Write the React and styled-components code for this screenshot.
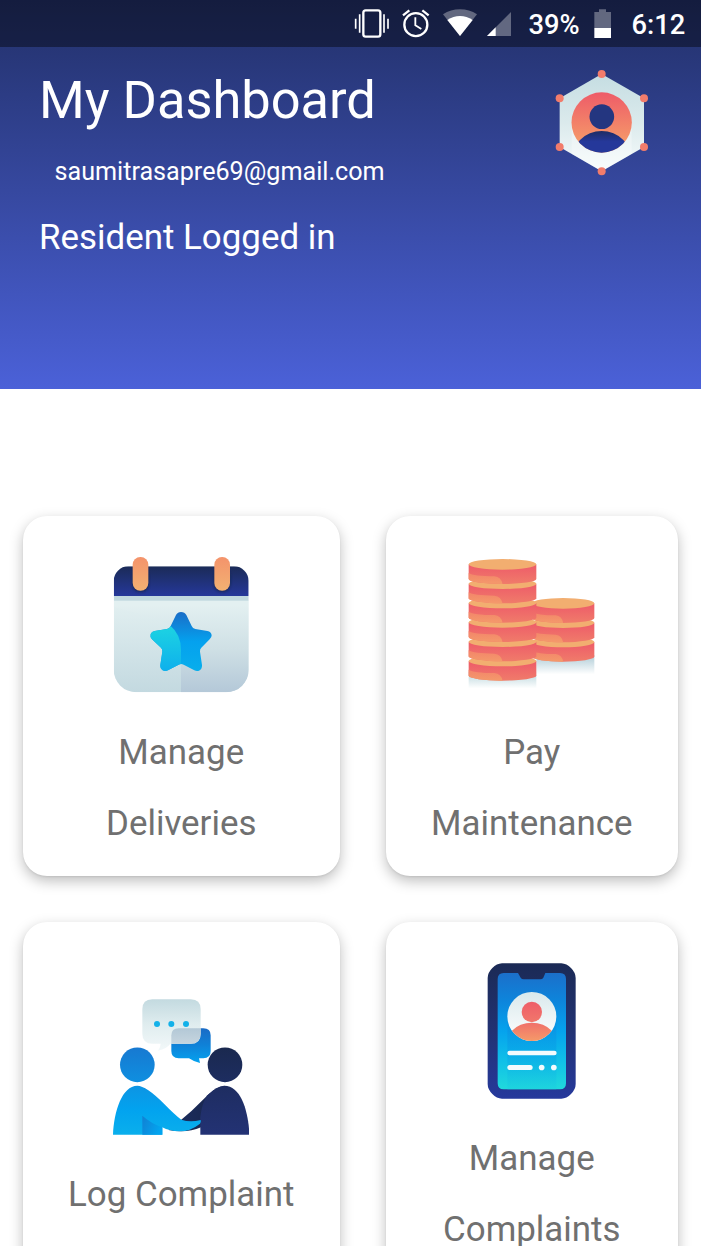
import React from "react";
import styled, { createGlobalStyle } from "styled-components";

const GlobalStyle = createGlobalStyle`
  * { box-sizing: border-box; }
  body { margin: 0; background: #fff; font-family: Roboto, "Liberation Sans", sans-serif; }
`;

const Screen = styled.div`
  width: 100%;
  height: 1246px;
  overflow: hidden;
  background: #fff;
`;

const Header = styled.header`
  height: 389px;
  color: #fff;
  background: linear-gradient(#223069, #4b61d8);
`;

const StatusBar = styled.div`
  height: 46.5px;
  padding-right: 15px;
  display: flex;
  justify-content: flex-end;
  align-items: center;
  background: rgba(0, 0, 0, 0.4);
`;

const StatusIcon = styled.svg`
  display: block;
  flex: none;
  width: ${(p) => p.$w}px;
  height: 46px;
  margin-right: ${(p) => p.$gap}px;
`;

const StatusText = styled.span`
  font-size: 27.3px;
  font-weight: 500;
  line-height: 46px;
  padding-top: 3px;
  width: ${(p) => p.$w}px;
  margin-right: ${(p) => p.$gap || 0}px;
  white-space: nowrap;
`;

const HeaderBody = styled.div`
  display: flex;
  justify-content: space-between;
  padding: 22px 52px 0 39px;
`;

const Title = styled.h1`
  margin: 0;
  font-size: 52.4px;
  line-height: 62px;
  font-weight: 400;
  white-space: nowrap;
`;

const Email = styled.div`
  margin: 24px 0 0 15.5px;
  font-size: 25.15px;
  line-height: 34px;
`;

const Role = styled.div`
  margin-top: 28px;
  font-size: 34.9px;
  line-height: 42px;
`;

const Avatar = styled.svg`
  display: block;
  flex: none;
  width: 94px;
  height: 108px;
`;

const Grid = styled.main`
  display: grid;
  grid-template-columns: 316.5px 291.5px;
  grid-auto-rows: 360px;
  gap: 46px 46.5px;
  padding: 126.5px 23px 0;
`;

const Card = styled.section`
  display: flex;
  flex-direction: column;
  align-items: center;
  justify-content: center;
  padding: 41.3px 20px 16.2px;
  border-radius: 24px;
  background: #fff;
  box-shadow: 0 5px 14px rgba(0, 0, 0, 0.26), 0 1px 2px rgba(0, 0, 0, 0.07);
`;

const CardIcon = styled.svg`
  display: block;
  flex: none;
  width: 136px;
  height: 136px;
  margin-bottom: 24px;
`;

const Label = styled.div`
  font-size: 34.9px;
  line-height: 71px;
  color: #707070;
  text-align: center;
  white-space: nowrap;
`;

const Grad = ({ id, stops, y1, y2 }) => (
  <linearGradient id={id} gradientUnits="userSpaceOnUse" x1="0" x2="0" y1={y1} y2={y2}>
    {stops.map((c, i) => (
      <stop key={i} offset={i / (stops.length - 1)} stopColor={c} />
    ))}
  </linearGradient>
);

const ProfileIcon = () => (
  <Avatar viewBox="45 27 282 324">
    <defs>
      <Grad id="hex" y1={42} y2={334} stops={["#c5dde2", "#dbeaec", "#f7fbfc"]} />
      <Grad id="disc" y1={97} y2={250} stops={["#ee5b68", "#f59a69"]} />
      <Grad id="bust" y1={212} y2={278} stops={["#1d2c62", "#25389a", "#25389a"]} />
      <clipPath id="discClip"><circle cx="185" cy="187.500" r="90.500" /></clipPath>
    </defs>
    <path d="M185 42 312 115V261L185 334 59 261V115Z" fill="url(#hex)" />
    <path d="M95 187H275V281L185 334 95 281Z" fill="#fff" opacity=".3" />
    <circle cx="185" cy="187.500" r="90.500" fill="url(#disc)" />
    <g clipPath="url(#discClip)">
      <circle cx="185" cy="305" r="92" fill="url(#bust)" />
    </g>
    <circle cx="185.500" cy="170" r="37" fill="#243680" />
    {[[185, 42], [312, 115], [312, 261], [185, 334], [59, 261], [59, 115]].map(([x, y]) => (
      <circle key={`${x}-${y}`} cx={x} cy={y} r="12" fill="#f27c6b" />
    ))}
  </Avatar>
);

const starPath =
  "M243 201Q254 201 259 210L275 243Q278 250 286 252L322 258Q334 260 335 271Q335 278 329 283L304 308Q299 313 300 320L306 360Q307 372 297 377Q290 380 283 376L251 359Q243 355 236 359L204 376Q196 380 188 376Q180 371 181 360L187 320Q188 313 183 308L156 283Q149 276 152 267Q155 260 164 258L201 252Q209 250 212 243L228 210Q233 201 243 201Z";

const CalendarIcon = () => (
  <CardIcon viewBox="39 36 408 408">
    <defs>
      <Grad id="calTop" y1={64} y2={153} stops={["#1b2b57", "#25389a"]} />
      <Grad id="calBody" y1={165} y2={442} stops={["#e3f0f1", "#c3d9e0"]} />
      <Grad id="calShade" y1={180} y2={442} stops={["#e3f0f1", "#cfe0e5", "#b4c8d8"]} />
      <Grad id="ring" y1={36} y2={137} stops={["#f4936b", "#f2b172"]} />
      <Grad id="starR" y1={201} y2={378} stops={["#1a6dc7", "#04a1ee", "#08aeec"]} />
      <Grad id="starL" y1={245} y2={378} stops={["#1dd3e2", "#0eb0ec"]} />
      <clipPath id="calClip"><path d="M85 64H402A44 44 0 0 1 446 108V374A68 68 0 0 1 378 442H109A68 68 0 0 1 41 374V108A44 44 0 0 1 85 64Z" /></clipPath>
      <clipPath id="starClip"><path d={starPath} /></clipPath>
      <filter id="ringShadow" x="-50%" y="-30%" width="200%" height="160%"><feGaussianBlur stdDeviation="3" /></filter>
    </defs>
    <g clipPath="url(#calClip)">
      <rect x="41" y="64" width="406" height="379" fill="url(#calBody)" />
      <path d="M41 165H447V443H243V258Q205 228 41 186Z" fill="url(#calShade)" />
      <rect x="41" y="153" width="406" height="14" fill="#c1d9df" />
      <rect x="41" y="60" width="406" height="93" fill="url(#calTop)" />
    </g>
    {[98, 343].map((x) => (
      <g key={x}>
        <rect x={x - 2} y="70" width="51" height="72" rx="24" fill="#18254a" opacity=".65" filter="url(#ringShadow)" />
        <rect x={x} y="36" width="47" height="101" rx="23" fill="url(#ring)" />
      </g>
    ))}
    <path d={starPath} fill="url(#starR)" />
    <path d="M140 240H209Q243 268 243 315V390H140Z" fill="url(#starL)" clipPath="url(#starClip)" />
  </CardIcon>
);

const Coin = ({ x, y, w }) => {
  const r = x + w;
  const m = x + w / 2;
  return (
    <g transform={`translate(0 ${y})`}>
      <path d={`M${x} 0V44A${w / 2} 15 0 0 0 ${r} 44V0Z`} fill="url(#coinSide)" />
      <path
        d={`M${x} 26Q${x + 15} 36 ${x + w * 0.38} 36Q${x + w * 0.48} 38 ${x + w * 0.5} 59A${w / 2} 15 0 0 1 ${x} 44Z`}
        fill="url(#coinGlow)"
      />
      <ellipse cx={m} cy="0" rx={w / 2} ry="16" fill="#f2ae70" />
    </g>
  );
};

const CoinsIcon = () => (
  <CardIcon viewBox="27 36 408 408">
    <defs>
      <Grad id="coinSide" y1={8} y2={58} stops={["#ee5f69", "#f07b6a"]} />
      <Grad id="coinGlow" y1={26} y2={58} stops={["#f3846a", "#f4996b"]} />
      <Grad id="castL" y1={390} y2={430} stops={["#c4dce1", "#ffffff"]} />
      <Grad id="castR" y1={335} y2={388} stops={["#b5d0da", "#ffffff"]} />
    </defs>
    <rect x="41" y="380" width="203" height="52" fill="url(#castL)" />
    <rect x="244" y="330" width="174" height="60" fill="url(#castR)" />
    {[291, 233, 175].map((y) => <Coin key={y} x={231} y={y} w={187} />)}
    {[348, 290, 232, 174, 116, 58].map((y) => <Coin key={y} x={41} y={y} w={203} />)}
  </CardIcon>
);

const MeetingIcon = () => (
  <CardIcon viewBox="39 39 408 408">
    <defs>
      <Grad id="bubble" y1={40} y2={193} stops={["#c3dae0", "#e0edef", "#f2f8f9"]} />
      <Grad id="reply" y1={127} y2={230} stops={["#1a6bc6", "#0f82d8", "#04a2ef"]} />
      <Grad id="overlap" y1={127} y2={173} stops={["#b3c8d6", "#c6d5df"]} />
      <Grad id="headL" y1={184} y2={288} stops={["#1779d1", "#0f8fe0"]} />
      <Grad id="bodyL" y1={299} y2={446} stops={["#0d94e3", "#02a3ef", "#0aafec"]} />
      <Grad id="headR" y1={184} y2={288} stops={["#1a294f", "#1d2d60"]} />
      <Grad id="bodyR" y1={299} y2={446} stops={["#1e2d61", "#233274"]} />
      <linearGradient id="armR" x1="0" x2="1"><stop offset="0" stopColor="#1d2e60" /><stop offset="1" stopColor="#17254b" /></linearGradient>
      <linearGradient id="fold" x1="0" y1="0" x2="1" y2=".4"><stop offset="0" stopColor="#1180d3" /><stop offset="1" stopColor="#03a4ef" /></linearGradient>
    </defs>
    <path d="M236 127H310Q332 127 332 148V195Q332 217 310 217H297L300 231Q283 228 267 217H236Q214 217 214 195V148Q214 127 236 127Z" fill="url(#reply)" />
    <path d="M157 40H272Q302 40 302 70V143Q302 173 272 173H211Q201 188 174 194Q182 183 182 173H157Q127 173 127 143V70Q127 40 157 40Z" fill="url(#bubble)" />
    <path d="M236 127H302V143Q302 173 272 173H214V148Q214 127 236 127Z" fill="url(#overlap)" />
    {[171, 214, 258].map((x) => <circle key={x} cx={x} cy="114" r="9" fill="#13b1e9" />)}
    <circle cx="112" cy="236.500" r="52" fill="url(#headL)" />
    <circle cx="375" cy="236.500" r="52" fill="url(#headR)" />
    <path d="M373 299Q347 301 309 341Q276 375 242 403L205 432Q260 443 303 424Z" fill="url(#armR)" />
    <path d="M373 299C425 299 446 382 448 446H301V393Q306 350 322 328Q350 300 373 299Z" fill="url(#bodyR)" />
    <path d="M112 299Q138 299 192 353Q223 385 244 401Q270 410 302 402Q304 407 300 413Q270 437 236 436Q208 435 187 424V446H39C42 376 66 299 112 299Z" fill="url(#bodyL)" />
    <path d="M127 389Q153 412 187 424V446H127Z" fill="url(#fold)" />
  </CardIcon>
);

const PhoneIcon = () => (
  <CardIcon viewBox="-18 39 408 408">
    <defs>
      <Grad id="frame" y1={40} y2={446} stops={["#1b2a55", "#223273", "#26399c"]} />
      <Grad id="display" y1={69} y2={418} stops={["#1b6fca", "#0d86dc", "#05a3ed", "#10bfe8", "#20d9dc"]} />
      <Grad id="panel" y1={200} y2={418} stops={["#0f84da", "#069fe9", "#1cd0df"]} />
      <Grad id="photo" y1={126} y2={273} stops={["#d9e9ec", "#ffffff"]} />
      <Grad id="face" y1={155} y2={217} stops={["#ee5e69", "#f1776b"]} />
      <Grad id="torso" y1={218} y2={273} stops={["#f0706a", "#f59a69"]} />
      <clipPath id="photoClip"><circle cx="185.500" cy="199.500" r="73.500" /></clipPath>
    </defs>
    <path d="M96 40H274Q290 41 303 54Q317 68 317 84V402Q317 418 303 432Q290 446 274 446H96Q80 446 67 432Q53 418 53 402V84Q53 68 67 54Q80 41 96 40Z" fill="url(#frame)" />
    <path d="M101 69H144L152 83Q155 88 161 88H211Q217 88 220 83L226 69H270Q288 69 288 87V400Q288 418 270 418H101Q83 418 83 400V87Q83 69 101 69Z" fill="url(#display)" />
    <rect x="112" y="200" width="147" height="218" fill="url(#panel)" opacity=".5" />
    <circle cx="185.500" cy="199.500" r="73.500" fill="url(#photo)" />
    <circle cx="185.500" cy="305" r="87" fill="url(#torso)" clipPath="url(#photoClip)" />
    <circle cx="185.500" cy="186" r="30.500" fill="url(#face)" />
    <rect x="112" y="302" width="148" height="14" rx="7" fill="#f3fbfd" />
    <rect x="112" y="345" width="76" height="15" rx="7.500" fill="#f3fbfd" />
    <circle cx="215" cy="352.500" r="8.500" fill="#f3fbfd" />
    <circle cx="251.500" cy="352.500" r="8.500" fill="#f3fbfd" />
  </CardIcon>
);

const cards = [
  { icon: CalendarIcon, lines: ["Manage", "Deliveries"] },
  { icon: CoinsIcon, lines: ["Pay", "Maintenance"] },
  { icon: MeetingIcon, lines: ["Log Complaint"] },
  { icon: PhoneIcon, lines: ["Manage", "Complaints"] },
];

export default function App() {
  return (
    <Screen>
      <GlobalStyle />
      <Header>
        <StatusBar>
          <StatusIcon viewBox="42 0 105 138" $w={35} $gap={13} fill="none" stroke="#fff">
            <rect x="70" y="31" width="51" height="79" rx="7" strokeWidth="7" />
            <path d="M59 43V98M132 43V98" strokeWidth="5" />
            <path d="M47 56V86M144 56V86" strokeWidth="5" />
          </StatusIcon>
          <StatusIcon viewBox="186 0 84 138" $w={28} $gap={12} fill="none" stroke="#fff">
            <circle cx="227.500" cy="74" r="34.500" strokeWidth="7" />
            <path d="M226 52V76L244 87" strokeWidth="5.500" />
            <path d="M189 46 208 31M266 46 247 31" strokeWidth="7" />
          </StatusIcon>
          <StatusIcon viewBox="306 0 108 138" $w={36} $gap={8} fill="#fff">
            <path d="M360 108 309 43Q332 28 360 28T411 43Z" opacity=".33" />
            <path d="M360 108 322 60Q340 48 360 48T398 60Z" />
          </StatusIcon>
          <StatusIcon viewBox="438 0 75 138" $w={25} $gap={18} fill="#fff">
            <path d="M513 36V108H441Z" opacity=".33" />
            <path d="M467 82V108H441Z" />
          </StatusIcon>
          <StatusText $w={51} $gap={14}>39%</StatusText>
          <StatusIcon viewBox="762 0 51 138" $w={17} $gap={21} fill="#fff">
            <path d="M763 36H777V28H798V36H813V84H763Z" opacity=".33" />
            <path d="M763 84H813V114H763Z" />
          </StatusIcon>
          <StatusText $w={54.5}>6:12</StatusText>
        </StatusBar>
        <HeaderBody>
          <div>
            <Title>My Dashboard</Title>
            <Email>saumitrasapre69@gmail.com</Email>
            <Role>Resident Logged in</Role>
          </div>
          <ProfileIcon />
        </HeaderBody>
      </Header>
      <Grid>
        {cards.map(({ icon: Icon, lines }) => (
          <Card key={lines.join(" ")}>
            <Icon />
            {lines.map((line) => <Label key={line}>{line}</Label>)}
          </Card>
        ))}
      </Grid>
    </Screen>
  );
}
